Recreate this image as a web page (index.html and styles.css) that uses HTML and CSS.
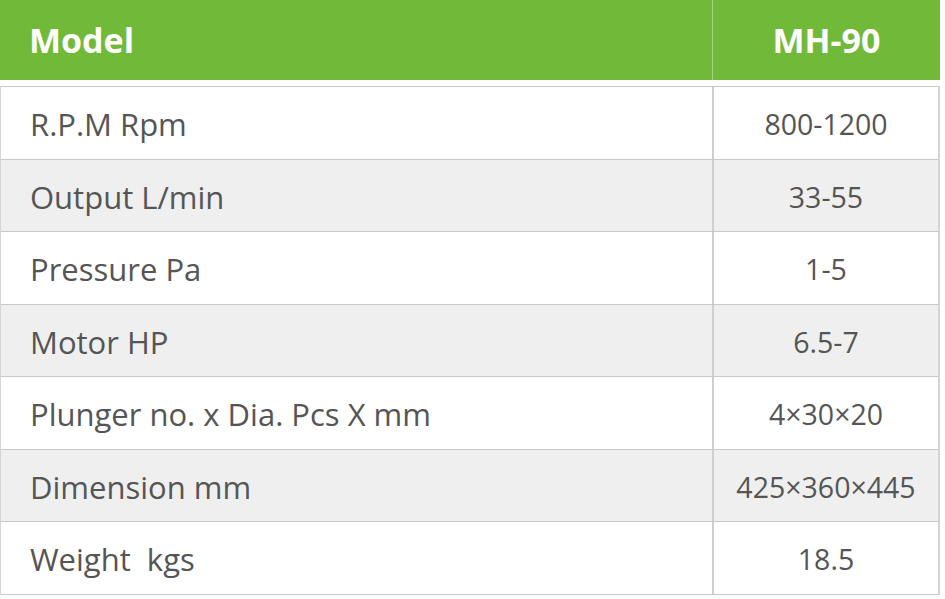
FILE: index.html
```html
<!DOCTYPE html>
<html>
<head>
<meta charset="utf-8">
<link rel="stylesheet" href="styles.css">
</head>
<body>
<div class="spec">
  <div class="head">
    <div class="hcell label">Model</div>
    <div class="hcell value">MH-90</div>
  </div>
  <div class="rows">
    <div class="row"><div class="cell label">R.P.M Rpm</div><div class="cell value">800-1200</div></div>
    <div class="row alt"><div class="cell label">Output L/min</div><div class="cell value">33-55</div></div>
    <div class="row"><div class="cell label">Pressure Pa</div><div class="cell value">1-5</div></div>
    <div class="row alt"><div class="cell label">Motor HP</div><div class="cell value">6.5-7</div></div>
    <div class="row"><div class="cell label">Plunger no. x Dia. Pcs X mm</div><div class="cell value">4×30×20</div></div>
    <div class="row alt"><div class="cell label">Dimension mm</div><div class="cell value">425×360×445</div></div>
    <div class="row"><div class="cell label">Weight &nbsp;kgs</div><div class="cell value">18.5</div></div>
  </div>
</div>
</body>
</html>
```
FILE: styles.css
```css
html, body { margin: 0; padding: 0; background: #fff; }
.spec { width: 940px; font-family: "Open Sans", sans-serif; }
.head {
  display: grid;
  grid-template-columns: 712px 1fr;
  height: 80px;
  background: #71ba39;
}
.hcell {
  display: flex;
  align-items: center;
  color: #fff;
  font-weight: 700;
  font-size: 34px;
}
.hcell.label { padding-left: 29px; }
.hcell.value { justify-content: center; border-left: 1px solid #a6d487; }
.rows { margin-top: 6px; border-left: 1px solid #d4d4d4; border-right: 2px solid #d4d4d4; }
.row {
  display: grid;
  grid-template-columns: 711px 1fr;
  height: 71.5px;
  border-top: 1px solid #c8c8c8;
}
.row:last-child { border-bottom: 1px solid #c8c8c8; }
.row.alt { background: #efefef; }
.cell {
  display: flex;
  align-items: center;
  padding-top: 3px;
  color: #555;
  font-size: 31px;
}
.cell.label { padding-left: 29px; }
.cell.value { justify-content: center; border-left: 2px solid #cfcfcf; font-size: 28.5px; }
```
